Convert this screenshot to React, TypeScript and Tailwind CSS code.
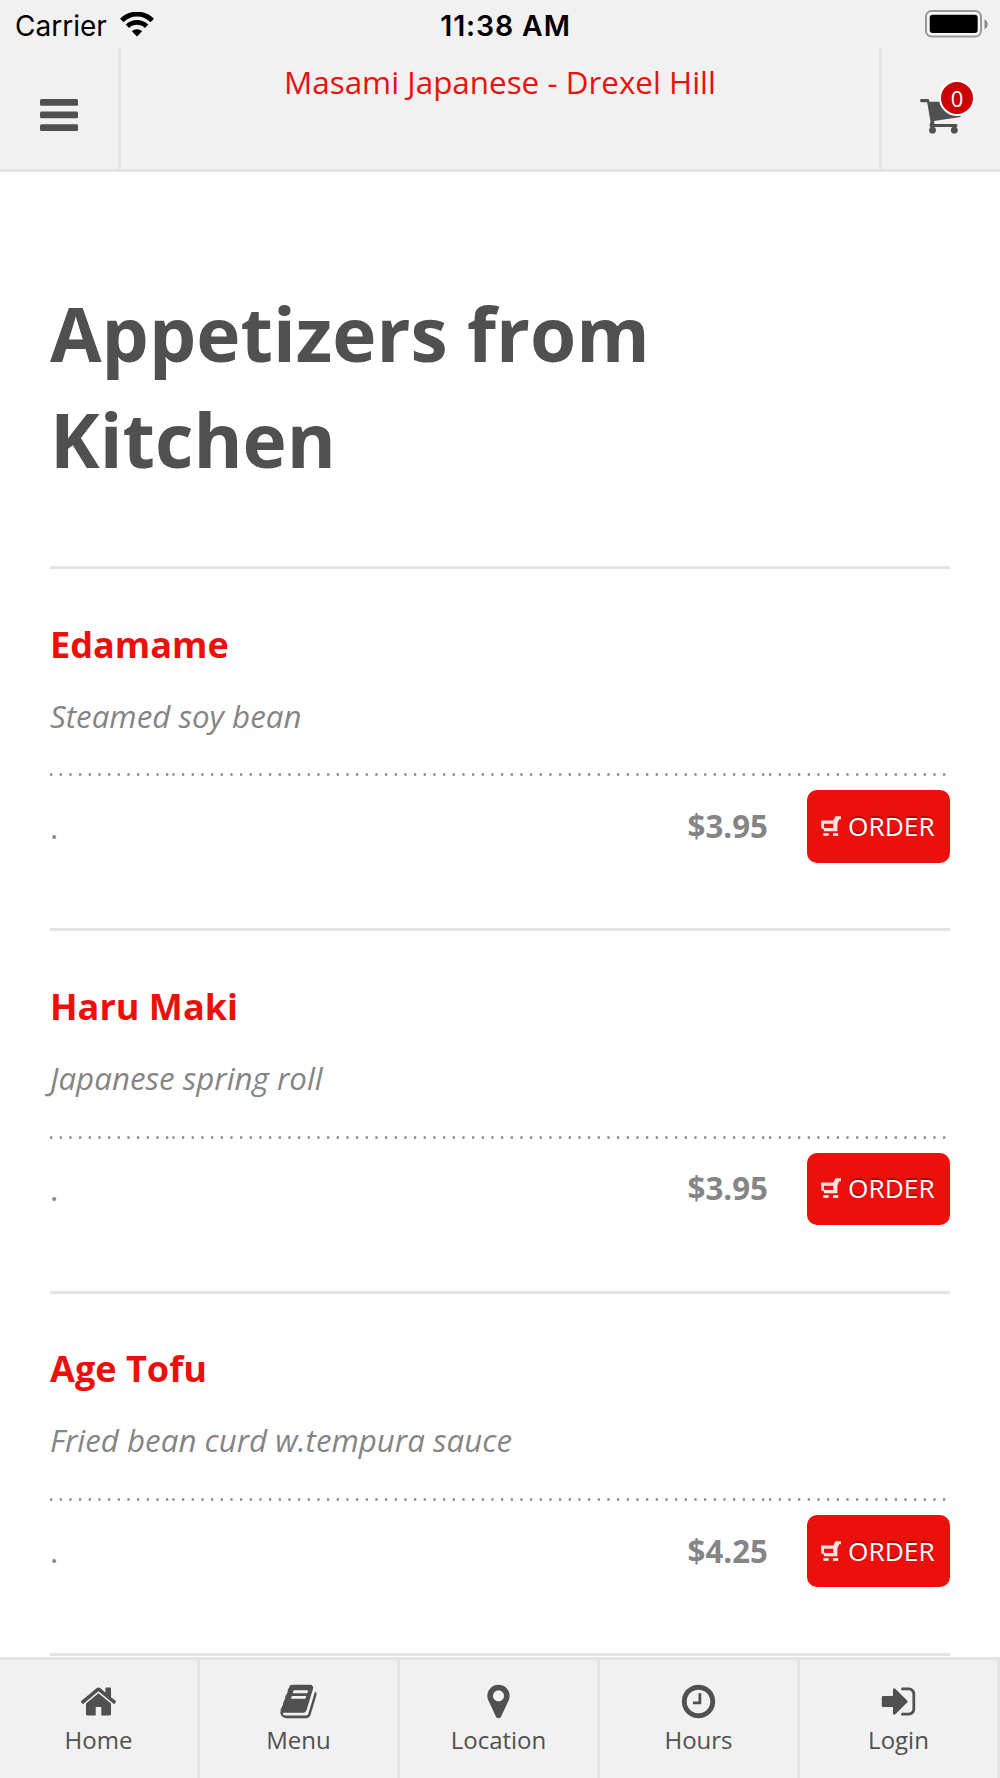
import React from "react";

const HOME =
  "M1472 992v480q0 26-19 45t-45 19h-384v-384h-256v384h-384q-26 0-45-19t-19-45v-480q0-1 .5-3t.5-3l575-474 575 474q1 2 1 6zm223-69l-62 74q-8 9-21 11h-3q-13 0-21-7l-692-577-692 577q-12 8-24 7-13-2-21-11l-62-74q-8-10-7-23.5t11-21.5l719-599q32-26 76-26t76 26l244 204v-195q0-14 9-23t23-9h192q14 0 23 9t9 23v408l219 182q10 8 11 21.5t-7 23.5z";
const BOOK =
  "M1703 478q40 57 18 129l-275 906q-19 64-76.5 107.5t-122.5 43.5h-923q-77 0-148.5-53.5t-99.5-131.5q-24-67-2-127 0-4 3-27t4-37q1-8-3-21.5t-3-19.5q2-11 8-21t16.5-23.5 16.5-23.5q23-38 45-91.5t30-91.5q3-10 .5-30t-.5-28q3-11 17-28t17-23q21-36 42-92t25-90q1-9-2.5-32t.5-28q4-13 22-30.5t22-22.5q19-26 42.5-84.5t27.5-96.5q1-8-3-25.5t-2-26.5q2-8 9-18t18-23 17-21q8-12 16.5-30.5t15-35 16-36 19.5-32 26.5-23.5 36-11.5 47.5 5.5l-1 3q38-9 51-9h761q74 0 114 56t18 130l-274 906q-36 119-71.5 153.5t-128.5 34.5h-869q-27 0-38 15-11 16-1 43 24 70 144 70h923q29 0 56-15.5t35-41.5l300-987q7-22 5-57 38 15 59 43zm-1064 2q-4 13 2 22.5t20 9.5h608q13 0 25.5-9.5t16.5-22.5l21-64q4-13-2-22.5t-20-9.5h-608q-13 0-25.5 9.5t-16.5 22.5zm-83 256q-4 13 2 22.5t20 9.5h608q13 0 25.5-9.5t16.5-22.5l21-64q4-13-2-22.5t-20-9.5h-608q-13 0-25.5 9.5t-16.5 22.5z";
const MARKER =
  "M1152 640q0-106-75-181t-181-75-181 75-75 181 75 181 181 75 181-75 75-181zm256 0q0 109-33 179l-364 774q-16 33-47.5 52t-67.5 19-67.5-19-46.5-52l-365-774q-33-70-33-179 0-212 150-362t362-150 362 150 150 362z";
const CLOCK =
  "M1024 544v448q0 14-9 23t-23 9h-320q-14 0-23-9t-9-23v-64q0-14 9-23t23-9h224v-352q0-14 9-23t23-9h64q14 0 23 9t9 23zm416 352q0-148-73-273t-198-198-273-73-273 73-198 198-73 273 73 273 198 198 273 73 273-73 198-198 73-273zm224 0q0 209-103 385.5t-279.5 279.5-385.5 103-385.5-103-279.5-279.5-103-385.5 103-385.5 279.5-279.5 385.5-103 385.5 103 279.5 279.5 103 385.5z";
const SIGN_IN =
  "M1312 896q0 26-19 45l-544 544q-19 19-45 19t-45-19-19-45v-288h-448q-26 0-45-19t-19-45v-384q0-26 19-45t45-19h448v-288q0-26 19-45t45-19 45 19l544 544q19 19 19 45zm352-352v704q0 119-84.5 203.5t-203.5 84.5h-320q-13 0-22.5-9.5t-9.5-22.5q0-4-1-20t-.5-26.5 3-23.5 10-19.5 20.5-6.5h320q66 0 113-47t47-113v-704q0-66-47-113t-113-47h-312l-11.5-1-11.5-3-8-5.5-7-9-2-13.5q0-4-1-20t-.5-26.5 3-23.5 10-19.5 20.5-6.5h320q119 0 203.5 84.5t84.5 203.5z";

const tabs = [
  { label: "Home", path: HOME },
  { label: "Menu", path: BOOK },
  { label: "Location", path: MARKER },
  { label: "Hours", path: CLOCK },
  { label: "Login", path: SIGN_IN },
];

const items = [
  { name: "Edamame", description: "Steamed soy bean", price: "$3.95" },
  { name: "Haru Maki", description: "Japanese spring roll", price: "$3.95" },
  { name: "Age Tofu", description: "Fried bean curd w.tempura sauce", price: "$4.25" },
];

function StatusBar() {
  return (
    <div className="grid h-12 grid-cols-3 items-center pl-[15px] pr-[12px] font-['Inter',sans-serif] text-black">
      <div className="flex items-center gap-[13px]">
        <span className="pt-[3px] text-[28px]">Carrier</span>
        <svg className="mt-px" width="34" height="25" viewBox="0 0 34 25" fill="none">
          <path d="M1.800 8.400a21.500 21.500 0 0 1 30.400 0" stroke="#000" strokeWidth="5" />
          <path d="M7.400 14.200a13.800 13.800 0 0 1 19.200 0" stroke="#000" strokeWidth="4.800" />
          <path d="M17 24.500l-5.200-5.200a7.500 7.500 0 0 1 10.400 0z" fill="#000" />
        </svg>
      </div>
      <span className="whitespace-nowrap pl-[8px] pt-[4px] text-center text-[28.400px] font-semibold tracking-[0.9px]">
        11:38 AM
      </span>
      <svg className="justify-self-end" width="63" height="28" viewBox="0 0 63 28">
        <rect x="1" y="1" width="55" height="25.500" rx="5.500" fill="#f6f6f6" stroke="#999" strokeWidth="2" />
        <rect x="4.700" y="4.800" width="48" height="18.200" rx="3" fill="#000" />
        <path d="M59.500 9.300q3.200 1.600 3.200 5t-3.200 5z" fill="#888" />
      </svg>
    </div>
  );
}

function Header() {
  return (
    <header className="flex h-[172px] flex-col border-b-[3px] border-[#e4e4e4] bg-[#f1f1f1]">
      <StatusBar />
      <div className="flex flex-1">
        <div className="flex w-[121px] items-center border-r-[3px] border-[#e4e4e4] pl-10">
          <svg className="mt-3" width="38" height="32" viewBox="0 0 38 32" fill="#505050">
            <rect y="0" width="38" height="6.700" rx="1.500" />
            <rect y="12.600" width="38" height="6.700" rx="1.500" />
            <rect y="25.200" width="38" height="6.700" rx="1.500" />
          </svg>
        </div>
        <div className="flex-1 pt-[12px] text-center text-[31.400px] leading-[44px] text-[#ec100c]">
          Masami Japanese - Drexel Hill
        </div>
        <div className="w-[121px] border-l-[3px] border-[#e4e4e4] pl-[38px] pt-[50px]">
          <div className="relative w-[42px]">
            <svg width="42" height="37" viewBox="0 0 42 37" fill="#505050">
              <path d="M1.500 1H8.600l1 2.800H40.500V19L14 23l.5 3H36q1.500 0 1.500 1.500T36 29H11q-1.800 0-1.500-1.700l1-3.500L7.200 4.300H1.500Q0 4.300 0 2.600T1.500 1z" />
              <circle cx="12.500" cy="32.200" r="3.400" />
              <circle cx="34.300" cy="32.200" r="3.400" />
            </svg>
            <span className="absolute -top-[18px] left-[19px] flex h-[36px] w-[36px] items-center justify-center rounded-full border-2 border-white bg-[#cc0000] text-[22px] leading-none text-white">
              0
            </span>
          </div>
        </div>
      </div>
    </header>
  );
}

function dotPositions() {
  const run = (start: number, count: number) =>
    Array.from({ length: count }, (_, i) => start + i * 9.667);
  return [...run(0, 13), ...run(122.3, 62), ...run(719, 19)];
}

function DottedLine() {
  return (
    <svg className="block" width="900" height="3" viewBox="0 0 900 3" fill="#858585">
      {dotPositions().map((x) => (
        <rect key={x} x={x} y="0.300" width="2.300" height="2.400" rx="0.500" />
      ))}
    </svg>
  );
}

function OrderButton() {
  return (
    <button className="flex h-[72.500px] w-[143px] items-center rounded-[10px] bg-[#ec100c] pl-[14px] text-[26.300px] text-white">
      <svg width="21" height="21" viewBox="0 0 21 21" fill="#fff">
        <path
          fillOpacity=".88"
          d="M14.500 .3h5.500v2.900h-1.800L16.400 7.500v7.800H3V12h9.300V7.800H3v3.200l1 1.600v1.600L.200 12V4.500h12.100z"
        />
        <path d="M2.400 17.200h5.200v2.600H2.400zM12 17.200h5.200v2.600H12z" />
      </svg>
      <span className="ml-[6px] [text-shadow:0_-2px_1px_rgba(0,0,0,0.3)]">ORDER</span>
    </button>
  );
}

function MenuItem({ name, description, price }: (typeof items)[number]) {
  return (
    <section className="h-[362.300px] border-t-[3px] border-[#e4e4e4] pt-[49.700px]">
      <h2 className="text-[36.100px] font-bold leading-[50px] text-[#ec100c]">{name}</h2>
      <p className="mt-[26px] text-[31.300px] italic leading-[42px] text-[#858585]">{description}</p>
      <div className="mt-[36.700px]">
        <DottedLine />
      </div>
      <div className="mt-[14px] flex items-center text-[31.250px] text-[#858585]">
        <span className="leading-[44px]">.</span>
        <span className="ml-auto mr-[39px] font-bold">{price}</span>
        <OrderButton />
      </div>
    </section>
  );
}

function TabBar() {
  return (
    <nav className="grid h-[121px] shrink-0 grid-cols-5 border-t-[3px] border-[#e4e4e4] bg-[#f1f1f1] text-[#505050]">
      {tabs.map((tab) => (
        <a key={tab.label} className="flex flex-col items-center border-r-[3px] border-[#e4e4e4] pt-[22px]">
          <svg width="39" height="39" viewBox="0 0 1792 1792" fill="currentColor">
            <path d={tab.path} />
          </svg>
          <span className="mt-[2px] text-[24px] leading-[34px]">{tab.label}</span>
        </a>
      ))}
    </nav>
  );
}

export default function App() {
  return (
    <div className="flex h-[1778px] w-[1000px] flex-col overflow-hidden bg-white font-['Open_Sans',sans-serif]">
      <Header />
      <main className="min-h-0 flex-1 overflow-hidden px-[50px]">
        <h1 className="h-[394px] w-[700px] pt-[108px] text-[74.800px] font-bold leading-[106px] text-[#505050]">
          Appetizers from Kitchen
        </h1>
        {items.map((item) => (
          <MenuItem key={item.name} {...item} />
        ))}
        <div className="h-[3px] bg-[#e4e4e4]" />
      </main>
      <TabBar />
    </div>
  );
}
